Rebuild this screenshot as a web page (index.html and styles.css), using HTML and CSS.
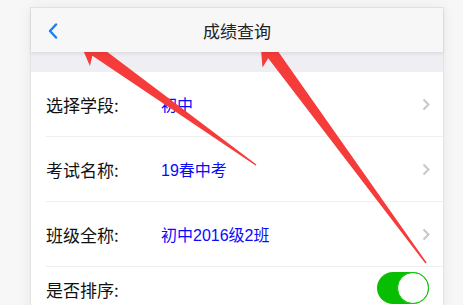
FILE: index.html
```html
<!DOCTYPE html>
<html lang="zh-CN">
<head>
<meta charset="utf-8">
<title>成绩查询</title>
<link rel="stylesheet" href="styles.css">
</head>
<body>
<div class="card">
  <header class="nav">
    <svg class="back" width="12" height="16" viewBox="0 0 12 16"><path d="M9 1.5 L3 8 L9 14.5" fill="none" stroke="#1a7ff5" stroke-width="2.4" stroke-linecap="round" stroke-linejoin="round"/></svg>
    <h1 class="title">成绩查询</h1>
  </header>
  <div class="band"></div>
  <ul class="list">
    <li class="row">
      <span class="label">选择学段:</span>
      <span class="value">初中</span>
      <svg class="chev" width="8" height="13" viewBox="0 0 8 13"><path d="M1.5 1.5 L6.5 6.5 L1.5 11.5" fill="none" stroke="#c7c7cc" stroke-width="2"/></svg>
    </li>
    <li class="row">
      <span class="label">考试名称:</span>
      <span class="value">19春中考</span>
      <svg class="chev" width="8" height="13" viewBox="0 0 8 13"><path d="M1.5 1.5 L6.5 6.5 L1.5 11.5" fill="none" stroke="#c7c7cc" stroke-width="2"/></svg>
    </li>
    <li class="row">
      <span class="label">班级全称:</span>
      <span class="value">初中2016级2班</span>
      <svg class="chev" width="8" height="13" viewBox="0 0 8 13"><path d="M1.5 1.5 L6.5 6.5 L1.5 11.5" fill="none" stroke="#c7c7cc" stroke-width="2"/></svg>
    </li>
    <li class="row row-switch">
      <span class="label">是否排序:</span>
      <span class="switch"><span class="knob"></span></span>
    </li>
  </ul>
</div>
<svg class="arrows" width="463" height="305" viewBox="0 0 463 305">
  <polygon fill="#f63b3b" points="256.4,164.4 99.4,45.9 108.5,40.1 78,38 89.9,66.1 92.4,55.7 255.6,165.6"/>
  <polygon fill="#f63b3b" points="426.6,262.5 277.8,51.1 288.3,48.5 260,37 262.5,67.5 268.2,58.3 425.4,263.5"/>
</svg>
</body>
</html>
```
FILE: styles.css
```css
* { box-sizing: border-box; }
html, body { margin: 0; padding: 0; }
body {
  width: 463px;
  height: 305px;
  overflow: hidden;
  background: #f7f7f7;
  font-family: "Liberation Sans", "Noto Sans CJK SC", sans-serif;
  position: relative;
}
.card {
  margin: 7px 0 0 30px;
  width: 414px;
  height: 320px;
  background: #fff;
  border: 1px solid #e3e3e3;
  box-shadow: 0 0 14px rgba(0,0,0,0.06);
}
.nav {
  height: 44px;
  background: #f7f7f7;
  display: flex;
  align-items: center;
  justify-content: center;
  position: relative;
  box-shadow: 0 2px 4px rgba(0,0,0,0.08);
  z-index: 1;
}
.back {
  position: absolute;
  left: 16px;
  top: 15px;
}
.title {
  margin: 0;
  font-size: 17px;
  font-weight: normal;
  color: #222;
  font-family: "Noto Sans CJK SC", sans-serif;
  line-height: 1;
  margin-top: 1px;
}
.band {
  height: 20px;
  background: #eeeef3;
}
.list {
  list-style: none;
  margin: 0 0 0 15px;
  padding: 0;
}
.row {
  height: 65px;
  display: flex;
  align-items: center;
  border-bottom: 1px solid #efefef;
  padding-right: 13px;
}
.row-switch {
  height: 44px;
  border-bottom: none;
  padding-right: 14px;
  align-items: flex-start;
  padding-top: 5px;
}
.label {
  width: 115px;
  font-size: 17px;
  color: #111;
  font-family: "Noto Sans CJK SC", sans-serif;
}
.row-switch .label { margin-top: 5px; }
.value {
  flex: 1;
  font-size: 16px;
  color: #0a0aff;
}
.chev { display: block; }
.switch {
  margin-left: auto;
  width: 52px;
  height: 32px;
  border-radius: 16px;
  background: #08be02;
  position: relative;
}
.knob {
  position: absolute;
  right: 0;
  top: 0;
  width: 32px;
  height: 32px;
  border-radius: 50%;
  background: #fff;
  border: 1px solid #08be02;
}
.arrows {
  position: absolute;
  left: 0;
  top: 0;
  pointer-events: none;
}
```
